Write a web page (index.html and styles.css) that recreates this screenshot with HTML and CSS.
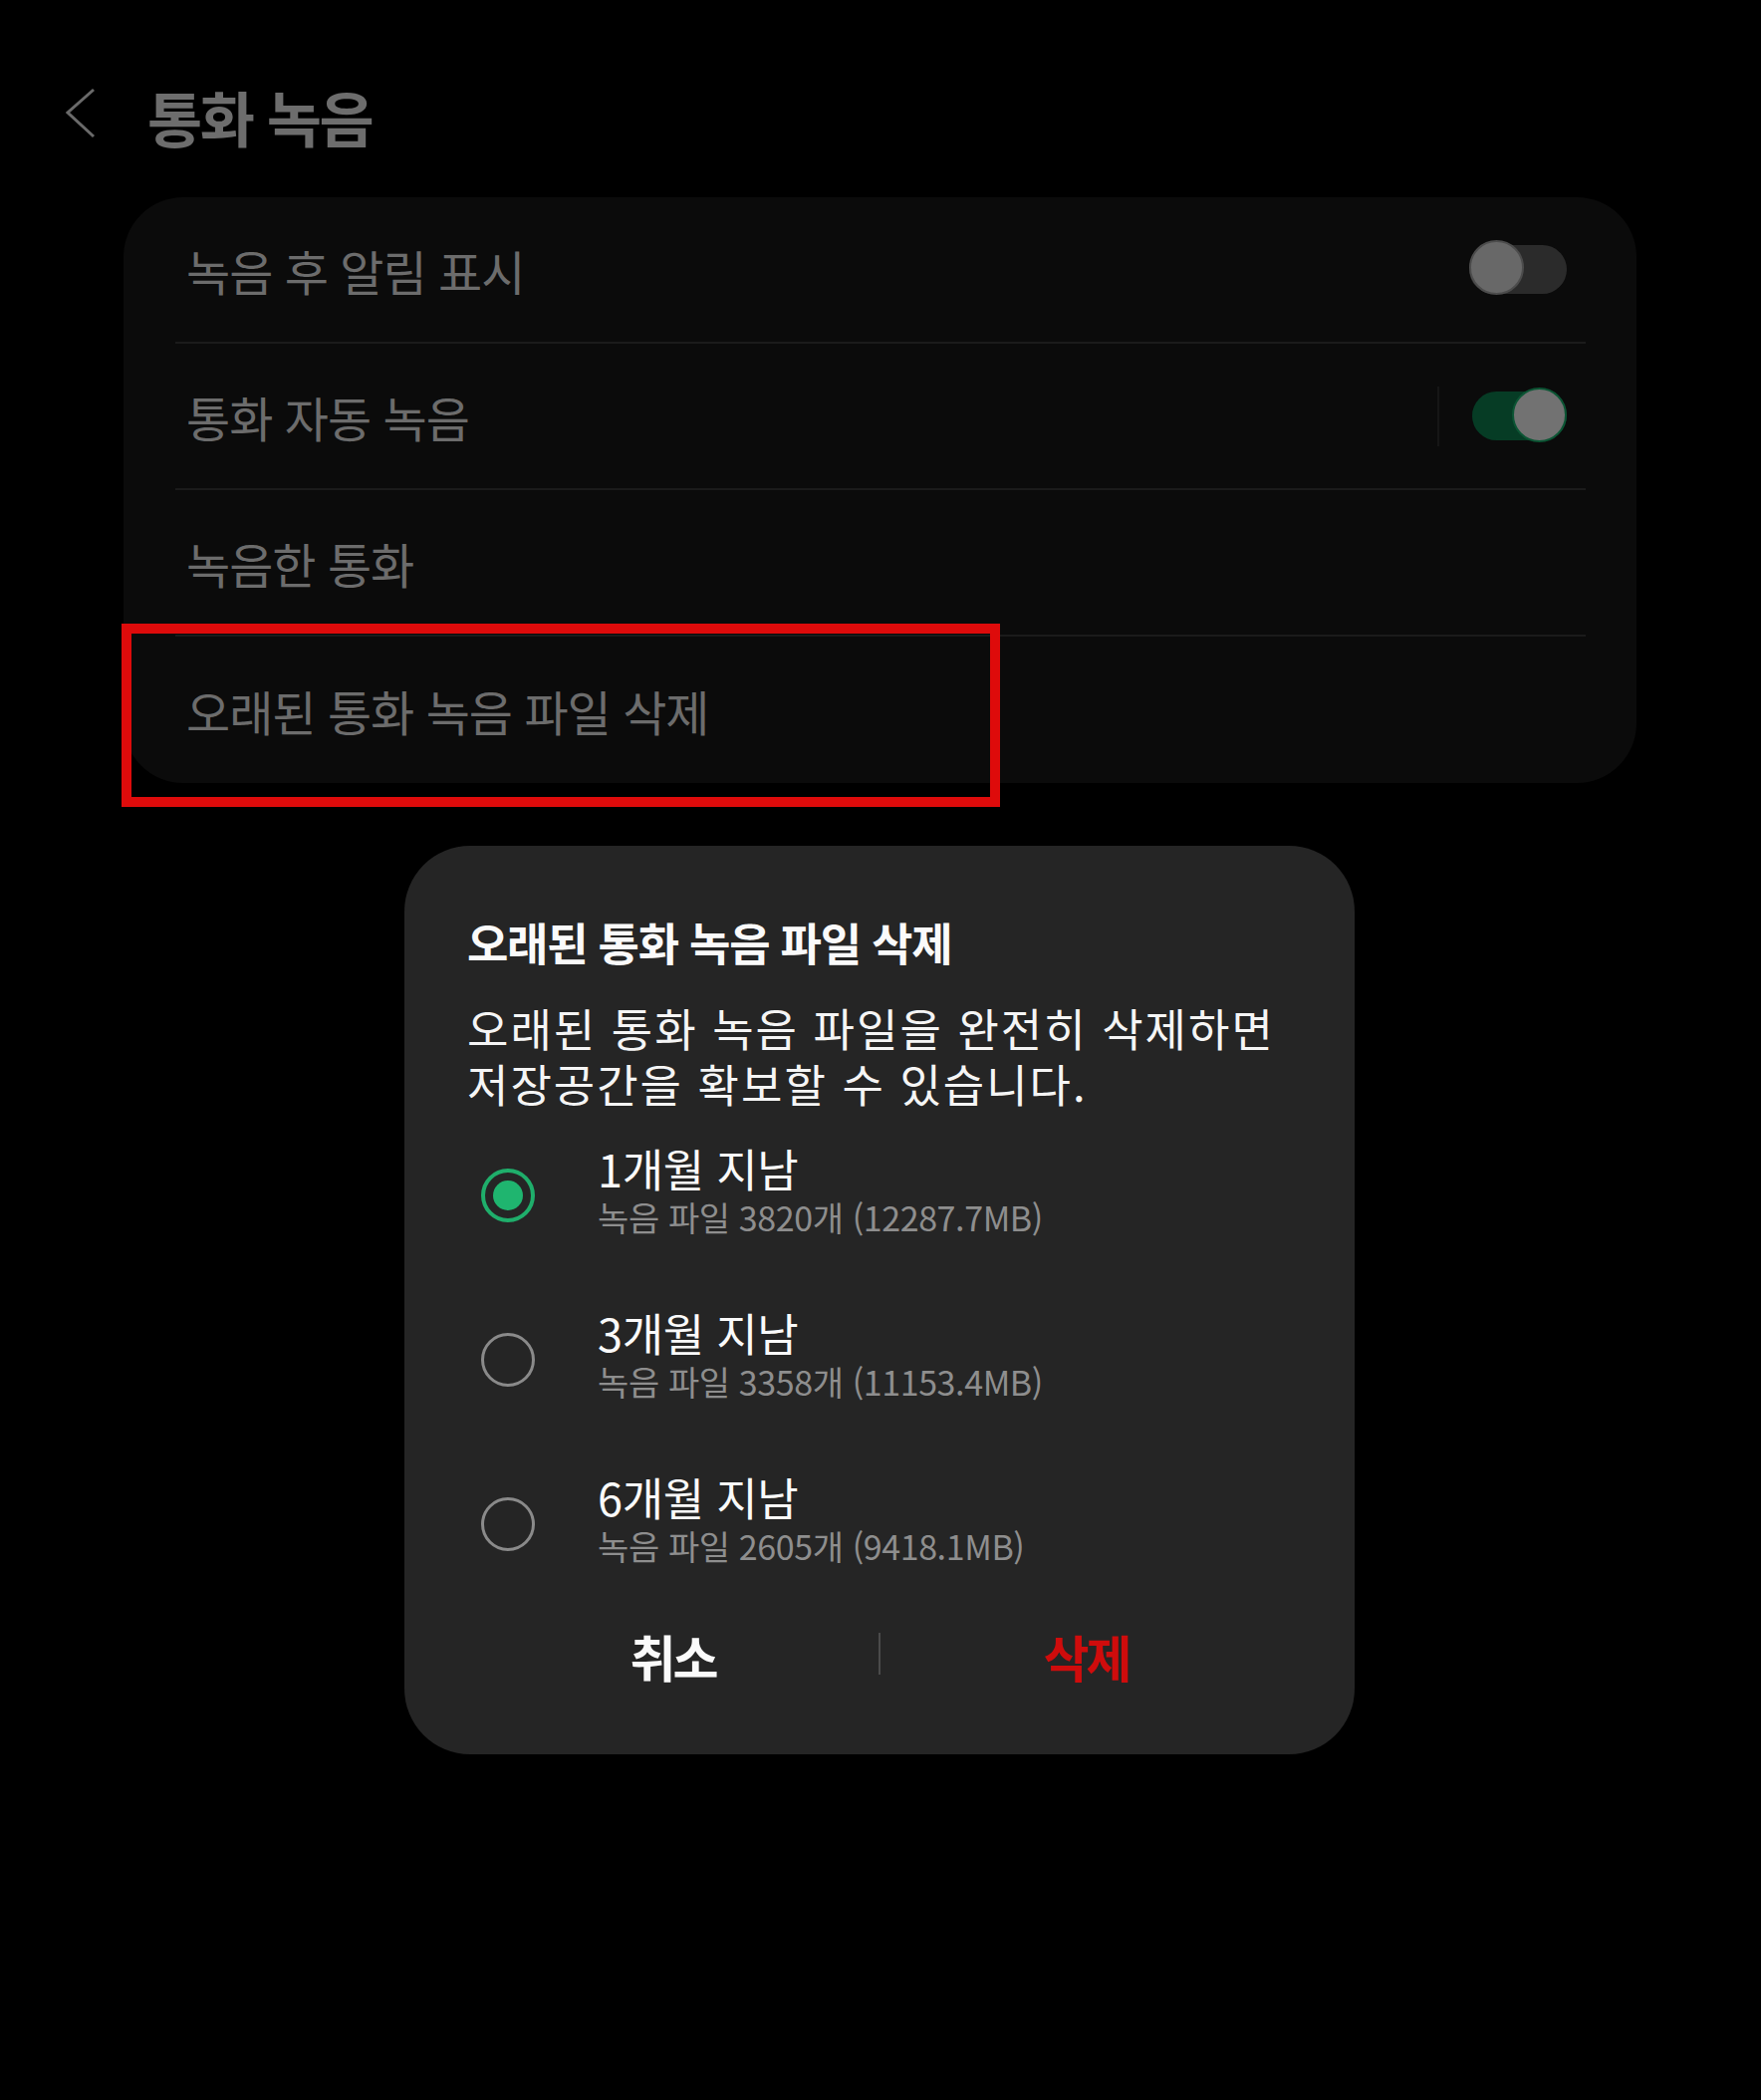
FILE: index.html
```html
<!DOCTYPE html>
<html lang="ko">
<head>
<meta charset="utf-8">
<title>통화 녹음</title>
<link rel="stylesheet" href="styles.css">
</head>
<body>
<div class="screen">
  <header class="header">
    <svg class="back" width="30" height="52" viewBox="0 0 30 52"><polyline points="28,2 2,25 28,49" fill="none" stroke="#6a6a6a" stroke-width="3"/></svg>
    <h1 class="title">통화 녹음</h1>
  </header>

  <section class="card">
    <div class="row">
      <span class="row-label">녹음 후 알림 표시</span>
      <span class="toggle off"><span class="knob"></span></span>
    </div>
    <div class="row">
      <span class="row-label">통화 자동 녹음</span>
      <span class="vsep"></span>
      <span class="toggle on"><span class="knob"></span></span>
    </div>
    <div class="row">
      <span class="row-label">녹음한 통화</span>
    </div>
    <div class="row last">
      <span class="row-label">오래된 통화 녹음 파일 삭제</span>
    </div>
  </section>

  <div class="highlight"></div>

  <section class="dialog">
    <h2 class="dlg-title">오래된 통화 녹음 파일 삭제</h2>
    <p class="dlg-body">오래된 통화 녹음 파일을 완전히 삭제하면<br>저장공간을 확보할 수 있습니다.</p>
    <div class="options">
      <div class="option">
        <span class="radio checked"></span>
        <div class="opt-text">
          <div class="opt-label">1개월 지남</div>
          <div class="opt-sub">녹음 파일 3820개 (12287.7MB)</div>
        </div>
      </div>
      <div class="option">
        <span class="radio"></span>
        <div class="opt-text">
          <div class="opt-label">3개월 지남</div>
          <div class="opt-sub">녹음 파일 3358개 (11153.4MB)</div>
        </div>
      </div>
      <div class="option">
        <span class="radio"></span>
        <div class="opt-text">
          <div class="opt-label">6개월 지남</div>
          <div class="opt-sub">녹음 파일 2605개 (9418.1MB)</div>
        </div>
      </div>
    </div>
    <div class="buttons">
      <span class="btn cancel">취소</span>
      <span class="btn-sep"></span>
      <span class="btn delete">삭제</span>
    </div>
  </section>
</div>
</body>
</html>
```

FILE: styles.css
```css
html, body {
  margin: 0;
  padding: 0;
  background: #000;
}
body {
  font-family: "Noto Sans CJK KR", "Noto Sans", sans-serif;
  width: 1768px;
  height: 2108px;
  overflow: hidden;
}
.screen {
  position: relative;
  width: 1768px;
  height: 2108px;
}
.header {
  display: flex;
  align-items: center;
  padding: 87px 0 0 66px;
  height: 60px;
  margin-bottom: 51px;
}
.back {
  display: block;
  margin-top: -6px;
}
.title {
  margin: 0 0 0 52px;
  font-size: 60px;
  line-height: 60px;
  font-weight: 700;
  letter-spacing: -2.5px;
  color: #6d6d6d;
}
.card {
  margin-left: 124px;
  width: 1519px;
  box-sizing: border-box;
  background: #0b0b0b;
  border-radius: 60px;
  padding: 0 51px 0 52px;
}
.row {
  display: flex;
  align-items: center;
  height: 147px;
  box-sizing: border-box;
  padding: 0 19px 0 11px;
  border-bottom: 2px solid #1b1b1b;
}
.row.last {
  border-bottom: none;
  height: 147px;
}
.row-label {
  flex: 1;
  font-size: 48px;
  letter-spacing: -1px;
  color: #6c6c6c;
  line-height: 60px;
}
.vsep {
  width: 2px;
  height: 60px;
  background: #161616;
  margin-right: 33px;
}
.toggle {
  position: relative;
  width: 98px;
  height: 49px;
  border-radius: 25px;
  flex: none;
}
.toggle.off {
  background: #2b2b2b;
}
.toggle.on {
  background: #063c25;
  width: 95px;
}
.knob {
  position: absolute;
  top: -5px;
  width: 55px;
  height: 55px;
  box-sizing: border-box;
  border-radius: 50%;
}
.toggle.off .knob {
  left: 0;
  background: #686868;
  border: 2px solid #4c4c4c;
}
.toggle.on .knob {
  right: 0;
  top: -4px;
  background: #727272;
  border: 2px solid #0c5534;
}
.highlight {
  position: absolute;
  left: 122px;
  top: 626px;
  width: 882px;
  height: 184px;
  box-sizing: border-box;
  border: 10px solid #de0b0b;
}
.dialog {
  margin: 63px 0 0 406px;
  width: 954px;
  height: 912px;
  box-sizing: border-box;
  background: #252525;
  border-radius: 66px;
  padding: 70px 63px 0 63px;
}
.dlg-title {
  margin: 0;
  font-size: 45px;
  line-height: 54px;
  font-weight: 700;
  letter-spacing: -1.3px;
  color: #fafafa;
}
.dlg-body {
  margin: 31px 0 0 0;
  font-size: 45px;
  line-height: 56px;
  letter-spacing: 2px;
  color: #f5f5f5;
  white-space: nowrap;
}
.options {
  margin-top: 1px;
}
.option {
  display: flex;
  align-items: center;
  height: 165px;
}
.radio {
  flex: none;
  width: 54px;
  height: 54px;
  box-sizing: border-box;
  border-radius: 50%;
  border: 3px solid #8a8a8a;
  margin-left: 14px;
  margin-right: 63px;
  display: flex;
  align-items: center;
  justify-content: center;
}
.radio.checked {
  border: 4px solid #1fae6b;
}
.radio.checked::after {
  content: "";
  width: 30px;
  height: 30px;
  border-radius: 50%;
  background: #1fb56f;
}
.opt-text {
  padding-bottom: 8px;
}
.opt-label {
  font-size: 45px;
  line-height: 52px;
  letter-spacing: -0.3px;
  color: #fafafa;
}
.opt-sub {
  font-size: 34px;
  line-height: 46px;
  letter-spacing: -0.4px;
  color: #8e8e8e;
}
.buttons {
  display: flex;
  align-items: center;
  height: 100px;
}
.btn {
  flex: 1;
  text-align: center;
  font-size: 50px;
  font-weight: 700;
  letter-spacing: -3px;
  line-height: 60px;
}
.cancel {
  color: #fafafa;
}
.delete {
  color: #cf0c0c;
}
.btn-sep {
  width: 2px;
  height: 42px;
  background: #4a4a4a;
  margin-top: -4px;
}
```
